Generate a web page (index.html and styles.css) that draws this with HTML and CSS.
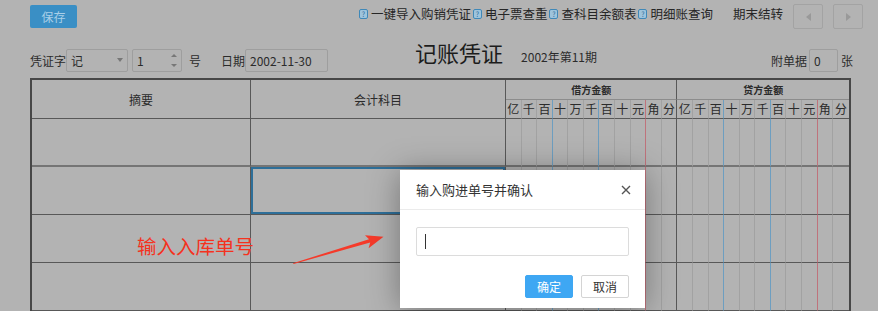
FILE: index.html
```html
<!DOCTYPE html>
<html lang="zh-CN">
<head>
    <meta charset="UTF-8">
    <meta name="viewport" content="width=device-width, initial-scale=1.0">
    <title>记账凭证</title>
    <link rel="stylesheet" href="styles.css">
</head>
<body>
    <!-- Top toolbar -->
    <div class="toolbar">
        <button class="btn-save">保存</button>
        <div class="quick-links">
            <a class="link"><i class="help">?</i>一键导入购销凭证</a>
            <a class="link"><i class="help">?</i>电子票查重</a>
            <a class="link"><i class="help">?</i>查科目余额表</a>
            <a class="link"><i class="help">?</i>明细账查询</a>
            <a class="link period-end">期末结转</a>
            <div class="pager">
                <button class="page-btn"><span class="tri tri-left"></span></button>
                <button class="page-btn"><span class="tri tri-right"></span></button>
            </div>
        </div>
    </div>

    <!-- Voucher header -->
    <div class="voucher-head">
        <span class="lbl">凭证字</span>
        <span class="field select">记<i class="drop"></i></span>
        <span class="field number">1<i class="spin"><b class="up"></b><b class="down"></b></i></span>
        <span class="lbl no">号</span>
        <span class="lbl date-lbl">日期</span>
        <span class="field date">2002-11-30</span>
        <div class="title-block">
            <h1>记账凭证</h1>
            <span class="period">2002年第11期</span>
        </div>
        <div class="attach">
            <span class="lbl">附单据</span>
            <span class="field count">0</span>
            <span class="lbl">张</span>
        </div>
    </div>

    <!-- Voucher table -->
    <table class="voucher">
        <colgroup>
            <col class="c-summary">
            <col class="c-subject">
        </colgroup>
        <thead>
            <tr class="group-row">
                <th rowspan="2" class="major">摘要</th>
                <th rowspan="2" class="major">会计科目</th>
                <th colspan="11" class="group major">借方金额</th>
                <th colspan="11" class="group last">贷方金额</th>
            </tr>
            <tr class="digit-row">
                <th>亿</th><th>千</th><th>百</th><th>十</th><th>万</th><th>千</th><th>百</th><th>十</th><th>元</th><th>角</th><th>分</th>
                <th>亿</th><th>千</th><th>百</th><th>十</th><th>万</th><th>千</th><th>百</th><th>十</th><th>元</th><th>角</th><th>分</th>
            </tr>
        </thead>
        <tbody>
            <tr class="first"><td></td><td></td><td></td><td></td><td></td><td></td><td></td><td></td><td></td><td></td><td></td><td></td><td></td><td></td><td></td><td></td><td></td><td></td><td></td><td></td><td></td><td></td><td></td><td></td></tr>
            <tr><td></td><td class="active"></td><td></td><td></td><td></td><td></td><td></td><td></td><td></td><td></td><td></td><td></td><td></td><td></td><td></td><td></td><td></td><td></td><td></td><td></td><td></td><td></td><td></td><td></td></tr>
            <tr><td></td><td></td><td></td><td></td><td></td><td></td><td></td><td></td><td></td><td></td><td></td><td></td><td></td><td></td><td></td><td></td><td></td><td></td><td></td><td></td><td></td><td></td><td></td><td></td></tr>
            <tr><td></td><td></td><td></td><td></td><td></td><td></td><td></td><td></td><td></td><td></td><td></td><td></td><td></td><td></td><td></td><td></td><td></td><td></td><td></td><td></td><td></td><td></td><td></td><td></td></tr>
        </tbody>
    </table>

    <!-- Annotation -->
    <span class="note">输入入库单号</span>
    <svg class="note-arrow" width="878" height="311" viewBox="0 0 878 311">
        <polygon points="293,263.2 369,239.2 365,235.3 383.5,236.8 368.6,248.2 370.2,242.6 293.6,263.9" fill="#f53a2a"/>
    </svg>

    <!-- Dialog -->
    <div class="dialog">
        <div class="dialog-head">
            <span>输入购进单号并确认</span>
            <svg class="close" width="10" height="10" viewBox="0 0 10 10">
                <path d="M1 1L9 9M9 1L1 9" stroke="#555" stroke-width="1.4" fill="none"/>
            </svg>
        </div>
        <div class="dialog-body">
            <div class="field-wrap">
                <input type="text" class="dialog-input">
                <span class="caret"></span>
            </div>
        </div>
        <div class="dialog-foot">
            <button class="btn-ok">确定</button>
            <button class="btn-cancel">取消</button>
        </div>
    </div>
</body>
</html>
```

FILE: styles.css
```css
/* Global */
* {
    box-sizing: border-box;
}

body {
    margin: 0;
    height: 311px;
    overflow: hidden;
    background: #b3b3b3;
    color: #2b2b2b;
    font-family: "Noto Sans CJK SC", "Microsoft YaHei", sans-serif;
    font-size: 12px;
}

/* Toolbar */
.toolbar {
    display: flex;
    justify-content: space-between;
    align-items: flex-start;
    height: 48px;
    padding: 4px 15px 0 30px;
}

.btn-save {
    margin-top: 1px;
    width: 47px;
    height: 23px;
    padding: 0;
    border: none;
    border-radius: 2px;
    background: #3a8fc5;
    color: #a9cfe8;
    font: 12px "Noto Sans CJK SC", sans-serif;
}

.quick-links {
    display: flex;
    align-items: flex-start;
}

.link {
    display: flex;
    align-items: center;
    gap: 3px;
    margin-left: 2px;
    font-size: 12.5px;
    line-height: 20px;
    color: #262626;
}

.help {
    display: inline-block;
    width: 9px;
    height: 10px;
    border: 1px solid #3f88b8;
    border-radius: 2px;
    background: #9ec4dc;
    color: #2f6f9c;
    font-size: 7px;
    line-height: 8px;
    font-style: normal;
    text-align: center;
}

.period-end {
    margin-left: 20px;
}

.pager {
    display: flex;
    gap: 10px;
    margin-left: 10px;
}

.page-btn {
    display: flex;
    align-items: center;
    justify-content: center;
    width: 30px;
    height: 25px;
    padding: 0;
    border: 1px solid #a3a3a3;
    border-radius: 2px;
    background: #b3b3b3;
}

.tri {
    width: 0;
    height: 0;
    border-top: 4px solid transparent;
    border-bottom: 4px solid transparent;
}

.tri-left {
    border-right: 5px solid #999;
}

.tri-right {
    border-left: 5px solid #999;
}

/* Voucher header */
.voucher-head {
    display: flex;
    align-items: center;
    height: 24px;
    padding-left: 30px;
}

.field {
    display: flex;
    align-items: center;
    height: 23px;
    padding-left: 4px;
    border: 1px solid #9e9e9e;
    border-radius: 2px;
    font-size: 12px;
}

.select {
    justify-content: space-between;
    width: 62px;
    margin-left: 0;
    padding-right: 4px;
}

.drop {
    border-top: 4px solid #777;
    border-left: 3px solid transparent;
    border-right: 3px solid transparent;
}

.number {
    justify-content: space-between;
    width: 50px;
    margin-left: 4px;
    padding-right: 4px;
}

.spin {
    display: flex;
    flex-direction: column;
    gap: 7px;
}

.spin b {
    border-left: 3px solid transparent;
    border-right: 3px solid transparent;
}

.spin .up {
    border-bottom: 3px solid #777;
}

.spin .down {
    border-top: 3px solid #777;
}

.no {
    margin-left: 7px;
}

.date-lbl {
    margin-left: 20px;
}

.date {
    width: 83px;
    margin-left: 0;
}

.title-block {
    display: flex;
    align-items: baseline;
    align-self: flex-start;
    margin-top: -10px;
    margin-left: 87px;
}

.title-block h1 {
    margin: 0;
    font-size: 22px;
    font-weight: normal;
    line-height: 28px;
    color: #1c1c1c;
}

.period {
    margin-left: 18px;
    font-size: 12px;
}

.attach {
    display: flex;
    align-items: center;
    margin-left: auto;
    padding-right: 25px;
}

.count {
    width: 29px;
    margin: 0 3px 0 2px;
}

/* Voucher table */
.voucher {
    width: 821px;
    margin: 6px 0 0 30px;
    border: 2px solid #474747;
    border-spacing: 0;
    table-layout: fixed;
}

.c-summary {
    width: 219px;
}

.c-subject {
    width: 255px;
}

.voucher th,
.voucher td {
    padding: 0;
    border-right: 1px solid #a2a2a2;
    border-bottom: 1px solid #585858;
    font-weight: normal;
    text-align: center;
}

.voucher th {
    font-size: 12px;
    color: #2b2b2b;
}

.voucher .major {
    border-right-color: #585858;
}

.voucher .last {
    border-right: none;
}

.group-row th {
    height: 20px;
}

.voucher th.group {
    border-bottom-color: #8c8c8c;
    font-size: 10px;
    font-weight: bold;
}

.digit-row th {
    height: 19px;
    font-size: 12px;
    line-height: 18px;
}

.digit-row th:nth-child(3),
.digit-row th:nth-child(6),
.digit-row th:nth-child(14),
.digit-row th:nth-child(17),
tbody td:nth-child(5),
tbody td:nth-child(8),
tbody td:nth-child(16),
tbody td:nth-child(19) {
    border-right-color: #6d9ec0;
}

.digit-row th:nth-child(9),
.digit-row th:nth-child(20),
tbody td:nth-child(11),
tbody td:nth-child(22) {
    border-right-color: #bf737c;
}

.digit-row th:nth-child(11),
tbody td:nth-child(1),
tbody td:nth-child(2),
tbody td:nth-child(13) {
    border-right-color: #585858;
}

.digit-row th:last-child,
tbody td:last-child {
    border-right: none;
}

tbody td {
    height: 48px;
}

tbody tr.first td {
    border-bottom: 2px solid #757575;
}

tbody td.active {
    box-shadow: inset 0 0 0 2px #2e6f99;
}

/* Annotation */
.note {
    position: absolute;
    left: 137px;
    top: 234px;
    font-size: 19.5px;
    line-height: 24px;
    color: #f5321e;
}

.note-arrow {
    position: absolute;
    left: 0;
    top: 0;
    pointer-events: none;
}

/* Dialog */
.dialog {
    position: absolute;
    left: 400px;
    top: 170px;
    width: 245px;
    height: 138px;
    background: #fff;
    box-shadow: 0 2px 30px rgba(0, 0, 0, 0.35);
}

.dialog-head {
    display: flex;
    align-items: center;
    justify-content: space-between;
    height: 40px;
    padding: 0 14px 0 16px;
    border-bottom: 1px solid #ebebeb;
    font-size: 13px;
    color: #333;
}

.dialog-body {
    padding: 17px 16px 0;
}

.field-wrap {
    position: relative;
}

.dialog-input {
    display: block;
    width: 100%;
    height: 29px;
    border: 1px solid #dcdcdc;
    border-radius: 2px;
    outline: none;
}

.caret {
    position: absolute;
    left: 9px;
    top: 7px;
    width: 1px;
    height: 15px;
    background: #333;
}

.dialog-foot {
    display: flex;
    justify-content: flex-end;
    gap: 8px;
    padding: 19px 16px 0;
}

.dialog-foot button {
    width: 48px;
    height: 23px;
    padding: 0;
    border-radius: 2px;
    font: 12px "Noto Sans CJK SC", sans-serif;
}

.btn-ok {
    border: 1px solid #3ea7f3;
    background: #3ea7f3;
    color: #fff;
}

.btn-cancel {
    border: 1px solid #d4d4d4;
    background: #fff;
    color: #333;
}
```
